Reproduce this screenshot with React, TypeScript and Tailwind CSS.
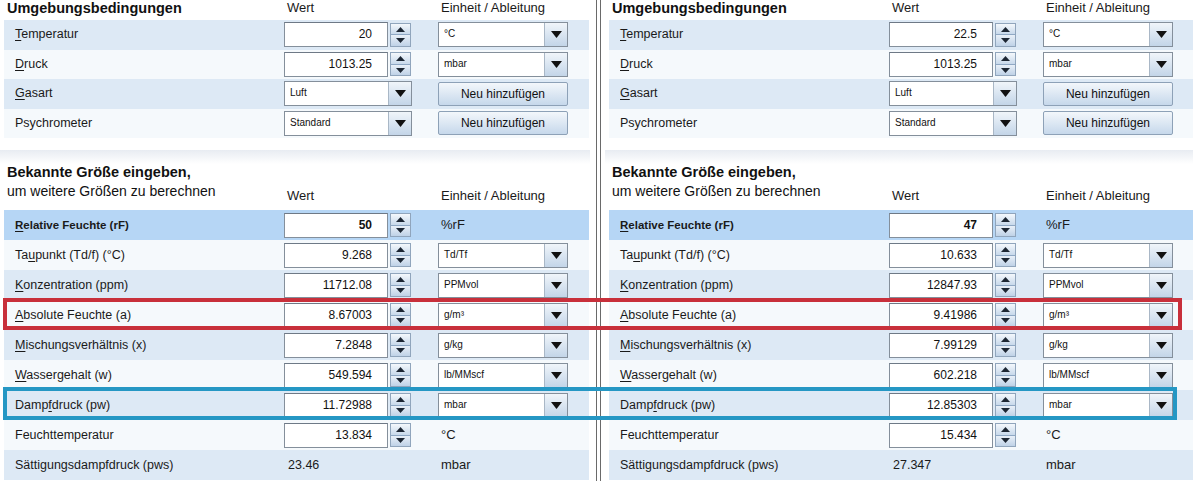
import React from 'react';

type Cell =
  | { kind: 'input'; v: string; bold?: boolean }
  | { kind: 'select'; v: string; wide?: boolean }
  | { kind: 'button'; v: string }
  | { kind: 'text'; v: string };

type Row = {
  label: React.ReactNode;
  value: Cell;
  unit: Cell;
  bg: string;
};

const U = ({ c }: { c: string }) => <span className="underline underline-offset-2">{c}</span>;

function Spinner() {
  return (
    <div className="ml-[2px] flex h-[24px] w-[21px] flex-col border border-[#90a5bc]">
      <div className="flex flex-1 items-center justify-center border-b border-[#8fa8c4] bg-gradient-to-b from-[#f4f8fc] to-[#c8d9eb]">
        <svg width="9" height="5" viewBox="0 0 9 5">
          <path d="M0 5L4.5 0L9 5Z" fill="#1c2633" />
        </svg>
      </div>
      <div className="flex flex-1 items-center justify-center bg-gradient-to-b from-[#e9f0f8] to-[#bfd2e7]">
        <svg width="9" height="5" viewBox="0 0 9 5">
          <path d="M0 0L4.5 5L9 0Z" fill="#1c2633" />
        </svg>
      </div>
    </div>
  );
}

function Arrow() {
  return (
    <div className="flex w-[23px] items-center justify-center border-l border-[#a9b7c6] bg-gradient-to-b from-[#f0f5fa] to-[#c3d5e8]">
      <svg width="11" height="7" viewBox="0 0 11 7">
        <path d="M0 0L11 0L5.5 7Z" fill="#111" />
      </svg>
    </div>
  );
}

function CellView({ cell, unit }: { cell: Cell; unit?: boolean }) {
  if (cell.kind === 'input') {
    return (
      <div className="flex items-center">
        <div
          className={`h-[25px] w-[104px] border border-[#848f9b] border-t-[#6e7986] bg-white pr-[15px] text-right text-[12px] leading-[23px] text-[#111] ${
            cell.bold ? 'font-bold' : ''
          }`}
        >
          {cell.v}
        </div>
        <Spinner />
      </div>
    );
  }
  if (cell.kind === 'select') {
    return (
      <div
        className={`flex h-[25px] border border-[#848f9b] bg-white ${cell.wide ? 'w-[128px]' : 'w-[130px]'}`}
      >
        <div className="flex-1 pl-[5px] text-[10px] leading-[21px] text-[#111]">{cell.v}</div>
        <Arrow />
      </div>
    );
  }
  if (cell.kind === 'button') {
    return (
      <div className="flex h-[24px] w-[130px] items-center justify-center rounded-[2px] border border-[#8da1b7] bg-gradient-to-b from-[#f3f7fb] to-[#c6d8eb] text-[12px] text-[#111]">
        {cell.v}
      </div>
    );
  }
  return (
    <div className={`pl-[3px] text-[#1a1a1a] ${unit ? 'text-[13px]' : 'pl-[4px] text-[12.5px]'}`}>{cell.v}</div>
  );
}

function RowView({ row, h }: { row: Row; h: string }) {
  return (
    <div className={`grid grid-cols-[280px_154px_1fr] items-center ${h} ${row.bg}`}>
      <div className="pl-[11px] text-[12.5px] text-[#1a1a1a]">{row.label}</div>
      <CellView cell={row.value} />
      <CellView cell={row.unit} unit />
    </div>
  );
}

const LIGHT = 'bg-[#dde9f5]';
const WHITE = 'bg-[#f5f9fc]';
const SEL = 'bg-[#b6d6f5]';

type PanelData = {
  temp: string;
  rf: string;
  vals: string[];
  pws: string;
};

function Panel({ d }: { d: PanelData }) {
  const top: Row[] = [
    { label: <><U c="T" />emperatur</>, value: { kind: 'input', v: d.temp }, unit: { kind: 'select', v: '°C' }, bg: LIGHT },
    { label: <><U c="D" />ruck</>, value: { kind: 'input', v: '1013.25' }, unit: { kind: 'select', v: 'mbar' }, bg: WHITE },
    { label: <><U c="G" />asart</>, value: { kind: 'select', v: 'Luft', wide: true }, unit: { kind: 'button', v: 'Neu hinzufügen' }, bg: LIGHT },
    { label: 'Psychrometer', value: { kind: 'select', v: 'Standard', wide: true }, unit: { kind: 'button', v: 'Neu hinzufügen' }, bg: WHITE },
  ];
  const bottom: Row[] = [
    {
      label: <span className="text-[11.5px] font-bold"><U c="R" />elative Feuchte (rF)</span>,
      value: { kind: 'input', v: d.rf, bold: true },
      unit: { kind: 'text', v: '%rF' },
      bg: SEL,
    },
    { label: <>Ta<U c="u" />punkt (Td/f) (°C)</>, value: { kind: 'input', v: d.vals[0] }, unit: { kind: 'select', v: 'Td/Tf' }, bg: WHITE },
    { label: <><U c="K" />onzentration (ppm)</>, value: { kind: 'input', v: d.vals[1] }, unit: { kind: 'select', v: 'PPMvol' }, bg: LIGHT },
    { label: <><U c="A" />bsolute Feuchte (a)</>, value: { kind: 'input', v: d.vals[2] }, unit: { kind: 'select', v: 'g/m³' }, bg: WHITE },
    { label: <><U c="M" />ischungsverhältnis (x)</>, value: { kind: 'input', v: d.vals[3] }, unit: { kind: 'select', v: 'g/kg' }, bg: LIGHT },
    { label: <><U c="W" />assergehalt (w)</>, value: { kind: 'input', v: d.vals[4] }, unit: { kind: 'select', v: 'lb/MMscf' }, bg: WHITE },
    { label: <>Damp<U c="f" />druck (pw)</>, value: { kind: 'input', v: d.vals[5] }, unit: { kind: 'select', v: 'mbar' }, bg: LIGHT },
    { label: 'Feuchttemperatur', value: { kind: 'input', v: d.vals[6] }, unit: { kind: 'text', v: '°C' }, bg: WHITE },
    { label: 'Sättigungsdampfdruck (pws)', value: { kind: 'text', v: d.pws }, unit: { kind: 'text', v: 'mbar' }, bg: LIGHT },
  ];

  return (
    <div className="flex flex-col bg-white pl-[4px]">
      {/* Umgebungsbedingungen */}
      <div className="grid h-[20px] w-[585px] grid-cols-[280px_154px_1fr]">
        <div className="pl-[3px] text-[14.5px] font-bold leading-[17px] text-[#111]">Umgebungsbedingungen</div>
        <div className="pl-[3px] text-[13px] leading-[15px] text-[#1a1a1a]">Wert</div>
        <div className="pl-[3px] text-[13px] leading-[15px] text-[#1a1a1a]">Einheit / Ableitung</div>
      </div>
      <div className="w-[585px]">
        {top.map((r, i) => (
          <RowView key={i} row={r} h="h-[29.5px]" />
        ))}
      </div>
      <div className="h-[12px]" />

      {/* Bekannte Größe */}
      <div className="-ml-[4px] h-[14px] w-[590px] bg-gradient-to-b from-[#e8ecf2] to-white" />
      <div className="grid h-[46px] w-[585px] grid-cols-[280px_154px_1fr]">
        <div className="pl-[3px] text-[#111]">
          <div className="text-[14.5px] font-bold leading-[17px]">Bekannte Größe eingeben,</div>
          <div className="text-[14px] leading-[20px]">um weitere Größen zu berechnen</div>
        </div>
        <div className="pl-[3px] pt-[24px] text-[13px] leading-[15px] text-[#1a1a1a]">Wert</div>
        <div className="pl-[3px] pt-[24px] text-[13px] leading-[15px] text-[#1a1a1a]">Einheit / Ableitung</div>
      </div>
      <div className="w-[585px]">
        {bottom.map((r, i) => (
          <RowView key={i} row={r} h="h-[30px]" />
        ))}
      </div>
    </div>
  );
}

const LEFT: PanelData = {
  temp: '20',
  rf: '50',
  vals: ['9.268', '11712.08', '8.67003', '7.2848', '549.594', '11.72988', '13.834'],
  pws: '23.46',
};

const RIGHT: PanelData = {
  temp: '22.5',
  rf: '47',
  vals: ['10.633', '12847.93', '9.41986', '7.99129', '602.218', '12.85303', '15.434'],
  pws: '27.347',
};

export default function App() {
  return (
    <div className="relative h-[481px] w-[1193px] overflow-hidden bg-white font-['Liberation_Sans',Arial,sans-serif]">
      <div className="flex h-full">
        <div className="w-[596px] shrink-0">
          <Panel d={LEFT} />
        </div>
        <div className="h-full w-px bg-[#6a6a6a]" />
        <div className="h-full w-[3px]" />
        <div className="h-full w-px bg-[#6a6a6a]" />
        <div className="h-full w-[4px]" />
        <div className="flex-1 overflow-hidden">
          <Panel d={RIGHT} />
        </div>
      </div>

      {/* highlight frames */}
      <div className="pointer-events-none absolute left-[3px] top-[298px] h-[32px] w-[1179px] border-[4px] border-[#c8303b]" />
      <div className="pointer-events-none absolute left-[3px] top-[387px] h-[33px] w-[1174px] border-[4px] border-[#2597c4]" />
    </div>
  );
}
